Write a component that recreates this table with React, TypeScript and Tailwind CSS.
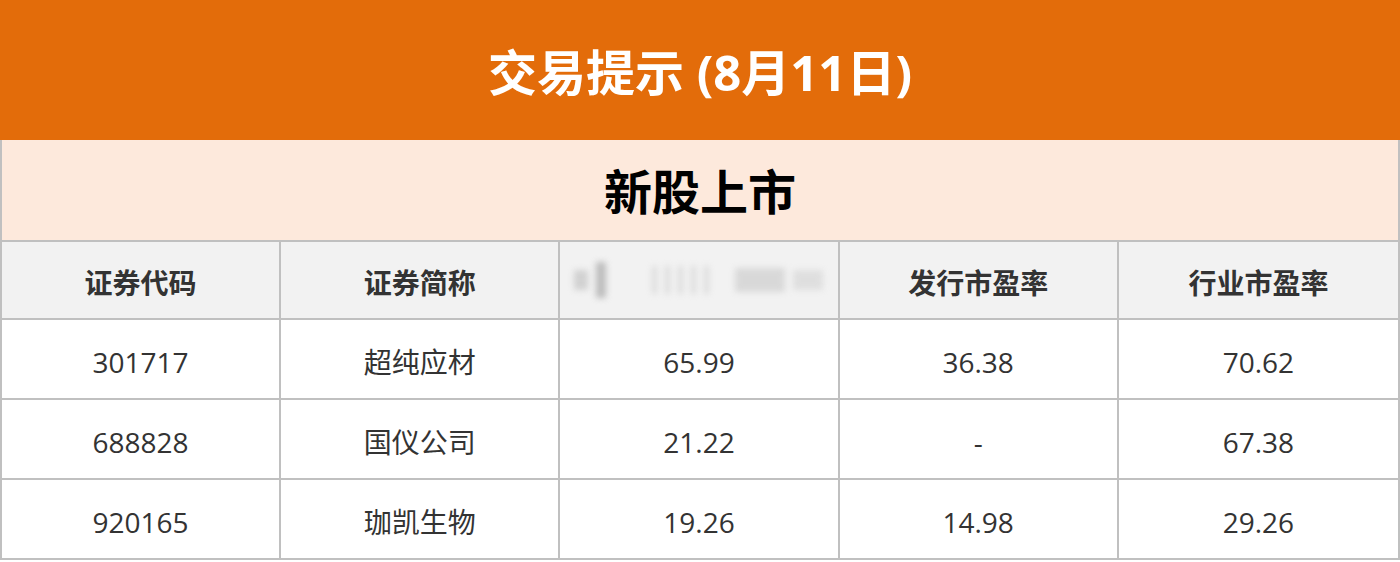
const rows = [
  ["301717", "超纯应材", "65.99", "36.38", "70.62"],
  ["688828", "国仪公司", "21.22", "-", "67.38"],
  ["920165", "珈凯生物", "19.26", "14.98", "29.26"],
];

function BlurredLabel() {
  return (
    <div className="flex items-center gap-[8px] blur-[3px] opacity-60 h-[40px]">
      <div className="w-[14px] h-[20px] bg-[#bbb]" />
      <div className="w-[10px] h-[36px] bg-[#999]" />
      <div className="w-[30px]" />
      <div className="w-[5px] h-[28px] bg-[#ccc]" />
      <div className="w-[5px] h-[28px] bg-[#ccc]" />
      <div className="w-[5px] h-[28px] bg-[#ccc]" />
      <div className="w-[5px] h-[28px] bg-[#ccc]" />
      <div className="w-[5px] h-[28px] bg-[#ccc]" />
      <div className="w-[10px]" />
      <div className="w-[50px] h-[24px] bg-[#c8c8c8]" />
      <div className="w-[30px] h-[20px] bg-[#d2d2d2]" />
    </div>
  );
}

export default function App() {
  return (
    <div
      className="w-[1400px] h-[562px] bg-white overflow-hidden"
      style={{ fontFamily: '"Open Sans", "Noto Sans CJK SC", sans-serif' }}
    >
      <div className="h-[140px] bg-[#e36c0a] flex items-center justify-center pt-[6px]">
        <h1 className="text-white text-[49px] font-bold">交易提示 (8月11日)</h1>
      </div>
      <div className="w-[1400px] border-l-2 border-r-2 border-[#c0c0c0]">
        <div className="h-[102px] bg-[#fde9dc] flex items-center justify-center border-b-2 border-[#c0c0c0] pt-[4px]">
          <h2 className="text-black text-[48px] font-bold">新股上市</h2>
        </div>
        <div className="grid grid-cols-5 h-[78px] bg-[#f2f2f2] border-b-2 border-[#c0c0c0] text-[28px] font-bold text-[#333]">
          <div className="flex items-center justify-center border-r-2 border-[#c0c0c0] pt-[5px]">证券代码</div>
          <div className="flex items-center justify-center border-r-2 border-[#c0c0c0] pt-[5px]">证券简称</div>
          <div className="flex items-center justify-center border-r-2 border-[#c0c0c0]">
            <BlurredLabel />
          </div>
          <div className="flex items-center justify-center border-r-2 border-[#c0c0c0] pt-[5px]">发行市盈率</div>
          <div className="flex items-center justify-center pt-[5px]">行业市盈率</div>
        </div>
        {rows.map((r, i) => (
          <div key={i} className="grid grid-cols-5 h-[80px] border-b-2 border-[#c0c0c0] text-[28px] text-[#333]">
            {r.map((c, j) => (
              <div
                key={j}
                className={
                  "flex items-center justify-center pt-[6px] " + (j < 4 ? "border-r-2 border-[#c0c0c0]" : "")
                }
              >
                {c}
              </div>
            ))}
          </div>
        ))}
      </div>
    </div>
  );
}
